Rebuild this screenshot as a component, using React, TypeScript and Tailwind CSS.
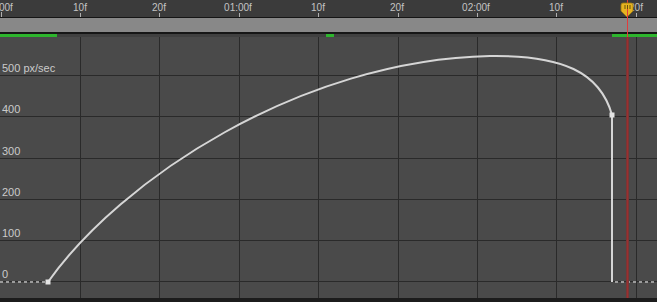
const ticks = [1, 80, 159, 239, 318, 398, 477, 556, 636]

const rulerLabels: { x: number; text: string; anchor: 'start' | 'middle' }[] = [
  { x: -1, text: '00f', anchor: 'start' },
  { x: 80, text: '10f', anchor: 'middle' },
  { x: 159, text: '20f', anchor: 'middle' },
  { x: 238, text: '01:00f', anchor: 'middle' },
  { x: 318, text: '10f', anchor: 'middle' },
  { x: 397, text: '20f', anchor: 'middle' },
  { x: 476, text: '02:00f', anchor: 'middle' },
  { x: 556, text: '10f', anchor: 'middle' },
  { x: 636, text: '20f', anchor: 'middle' },
]

// y positions in page coordinates
const rows = [
  { y: 75, label: '500 px/sec' },
  { y: 116, label: '400' },
  { y: 158, label: '300' },
  { y: 199, label: '200' },
  { y: 240, label: '100' },
  { y: 281, label: '0' },
]

const Ruler = () => (
  <svg width={657} height={17} className="block">
    {rulerLabels.map((l, i) => (
      <text
        key={i}
        x={l.x}
        y={10.5}
        textAnchor={l.anchor}
        fontSize={10}
        fill="#c4c4c4"
      >
        {l.text}
      </text>
    ))}
    {ticks.map((x) => (
      <line
        key={x}
        x1={x + 0.5}
        x2={x + 0.5}
        y1={x === 1 ? 12 : 13}
        y2={17}
        stroke="#b0b0b0"
        strokeWidth={1}
      />
    ))}
  </svg>
)

const Graph = () => (
  <svg width={657} height={261} viewBox="0 37 657 261" className="block">
    {ticks.slice(1).map((x) => (
      <line
        key={x}
        x1={x + 0.5}
        x2={x + 0.5}
        y1={37}
        y2={298}
        stroke="#2a2a2a"
        strokeWidth={1}
      />
    ))}
    {rows.map((r) => (
      <g key={r.y}>
        <line x1={0} x2={657} y1={r.y + 0.5} y2={r.y + 0.5} stroke="#2a2a2a" strokeWidth={1} />
        <text x={2} y={r.y - 3} fontSize={11} fill="#cacaca">
          {r.label}
        </text>
      </g>
    ))}
    {/* dashed zero line outside keys */}
    <line x1={0} x2={46} y1={282} y2={282} stroke="#9c9c9c" strokeWidth={2} strokeDasharray="3 3" />
    <line x1={615} x2={657} y1={282} y2={282} stroke="#9c9c9c" strokeWidth={2} strokeDasharray="3 3" />
    {/* velocity curve */}
    <path
      d="M48 282 C 120 180, 300 60, 490 56 C 562 55, 600 72, 612 115 L 612 282"
      fill="none"
      stroke="#d6d6d6"
      strokeWidth={2}
    />
    <rect x={45.5} y={279.5} width={5} height={5} fill="#e4e4e4" />
    <rect x={609.5} y={112.5} width={5} height={5} fill="#e4e4e4" />
  </svg>
)

export default function App() {
  return (
    <div className="relative w-[657px] h-[302px] overflow-hidden bg-[#1c1c1c] font-['Liberation_Sans',Arial,sans-serif]">
      <div className="flex flex-col">
        <div className="bg-[#3b3b3b]">
          <Ruler />
        </div>
        <div className="h-px bg-[#151515]" />
        <div className="h-[14px] bg-[#888888]" />
        <div className="h-[2px] bg-[#161616]" />
        <div className="flex h-[3px] bg-[#404040]">
          <div className="w-[57px] bg-[#2db52d]" />
          <div className="w-[269px]" />
          <div className="w-[8px] bg-[#2db52d]" />
          <div className="w-[278px]" />
          <div className="flex-1 bg-[#2db52d]" />
        </div>
        <div className="bg-[#4a4a4a]">
          <Graph />
        </div>
      </div>

      {/* current time indicator */}
      <div className="absolute left-[626px] top-[37px] w-[3px] h-[261px] bg-[#7a3535]" />
      <div className="absolute left-[627px] top-[37px] w-px h-[261px] bg-[#9a3030]" />
      <div className="absolute left-[627px] top-0 w-px h-[37px] bg-[#e23c3c]" />
      <svg className="absolute left-[620px] top-[2px]" width={14} height={16} viewBox="0 0 14 16">
        <path
          d="M1 3 Q1 1 3 1 H11 Q13 1 13 3 V9 L7 15 L1 9 Z"
          fill="#e6b320"
          stroke="#9c7a10"
          strokeWidth={0.8}
        />
        <line x1={5} x2={5} y1={3} y2={7} stroke="#6b5208" strokeWidth={1} />
        <line x1={7.5} x2={7.5} y1={3} y2={7} stroke="#6b5208" strokeWidth={1} />
        <line x1={10} x2={10} y1={3} y2={7} stroke="#6b5208" strokeWidth={1} />
        <line x1={7.5} x2={7.5} y1={7} y2={16} stroke="#e23c3c" strokeWidth={1} />
      </svg>
    </div>
  )
}
